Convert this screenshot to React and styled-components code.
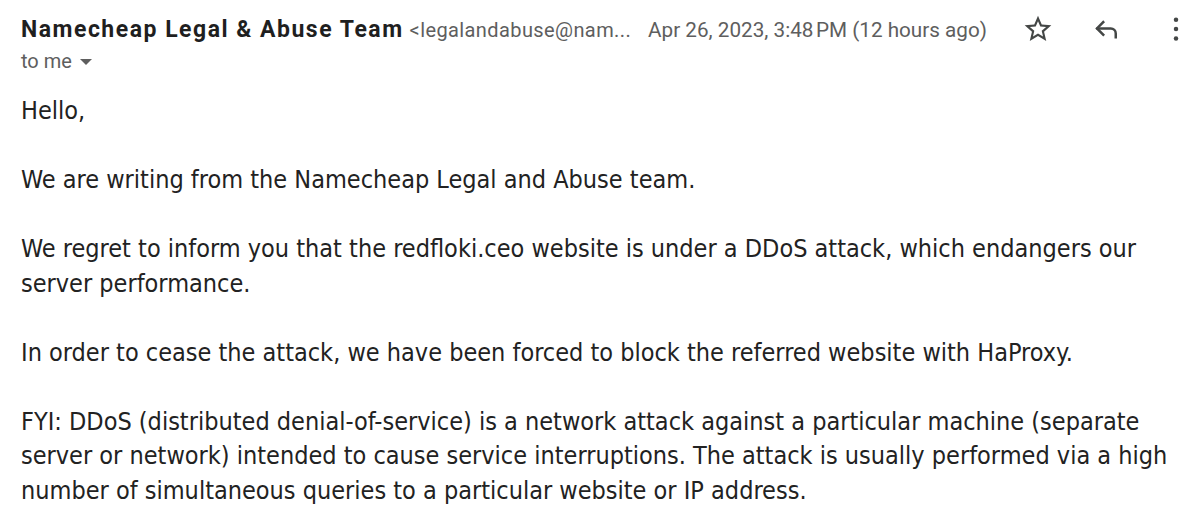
import React from 'react';
import styled, { createGlobalStyle } from 'styled-components';

const GlobalStyle = createGlobalStyle`
  body {
    margin: 0;
    background: #fff;
  }
`;

const Page = styled.div`
  width: 1200px;
  height: 530px;
  overflow: hidden;
  padding: 12px 0 0 21px;
  box-sizing: border-box;
`;

const Header = styled.div`
  display: flex;
  align-items: center;
  height: 34px;
`;

const Sender = styled.div`
  flex: 1;
  display: flex;
  align-items: baseline;
  min-width: 0;
  white-space: nowrap;
`;

const Name = styled.span`
  font-family: Roboto, 'Liberation Sans', sans-serif;
  font-weight: 700;
  font-size: 23px;
  letter-spacing: 1.5px;
  color: #1f1f1f;
`;

const Email = styled.span`
  font-family: Roboto, 'Liberation Sans', sans-serif;
  font-size: 20px;
  letter-spacing: 0.4px;
  color: #5e5e5e;
  margin-left: 6px;
`;

const Date = styled.span`
  font-family: Roboto, 'Liberation Sans', sans-serif;
  font-size: 20.7px;
  color: #5e5e5e;
  margin-left: 17px;
`;

const Actions = styled.div`
  display: flex;
  align-items: center;
  gap: 37px;
  margin-right: 8px;
`;

const IconButton = styled.button`
  border: 0;
  background: none;
  padding: 0;
  width: 32px;
  height: 32px;
  display: flex;
  align-items: center;
  justify-content: center;
  color: #444746;
`;

const ToLine = styled.div`
  display: flex;
  align-items: center;
  gap: 8px;
  font-family: Roboto, 'Liberation Sans', sans-serif;
  font-size: 20px;
  color: #5e5e5e;
  height: 30px;
`;

const Caret = styled.span`
  width: 0;
  height: 0;
  border-left: 6px solid transparent;
  border-right: 6px solid transparent;
  border-top: 6px solid #5e5e5e;
  margin-top: 2px;
`;

const Body = styled.div`
  margin-top: 18px;
  width: 1160px;
  font-family: 'DejaVu Sans Condensed', 'DejaVu Sans', sans-serif;
  font-size: 25px;
  line-height: 34.5px;
  color: #222;
`;

const Para = styled.p`
  margin: 0 0 34.5px;
`;

const StarIcon = () => (
  <svg width="32" height="32" viewBox="0 0 24 24" fill="currentColor">
    <path d="M22 9.24l-7.19-.62L12 2 9.19 8.63 2 9.24l5.46 4.73L5.82 21 12 17.27 18.18 21l-1.63-7.03L22 9.24zM12 15.4l-3.76 2.27 1-4.28-3.32-2.88 4.38-.38L12 6.1l1.71 4.04 4.38.38-3.32 2.88 1 4.28L12 15.4z" />
  </svg>
);

const ReplyIcon = () => (
  <svg width="30" height="30" viewBox="0 0 24 24" fill="none" stroke="currentColor" strokeWidth="2" strokeLinecap="square">
    <path d="M9 6.5L4 11.5l5 5" />
    <path d="M4.5 11.5H15a4 4 0 0 1 4 4v3" />
  </svg>
);

const MoreIcon = () => (
  <svg width="30" height="30" viewBox="0 0 24 24" fill="currentColor">
    <circle cx="12" cy="4.5" r="1.8" />
    <circle cx="12" cy="12" r="1.8" />
    <circle cx="12" cy="19.5" r="1.8" />
  </svg>
);

const App = () => (
  <>
    <GlobalStyle />
    <Page>
      <Header>
        <Sender>
          <Name>Namecheap Legal &amp; Abuse Team</Name>
          <Email>&lt;legalandabuse@nam...</Email>
          <Date>Apr 26, 2023, 3:48&#8239;PM (12 hours ago)</Date>
        </Sender>
        <Actions>
          <IconButton><StarIcon /></IconButton>
          <IconButton><ReplyIcon /></IconButton>
          <IconButton><MoreIcon /></IconButton>
        </Actions>
      </Header>
      <ToLine>
        to me <Caret />
      </ToLine>
      <Body>
        <Para>Hello,</Para>
        <Para>We are writing from the Namecheap Legal and Abuse team.</Para>
        <Para>
          We regret to inform you that the redfloki.ceo website is under a DDoS attack, which endangers our
          server performance.
        </Para>
        <Para>In order to cease the attack, we have been forced to block the referred website with HaProxy.</Para>
        <Para>
          FYI: DDoS (distributed denial-of-service) is a network attack against a particular machine (separate
          server or network) intended to cause service interruptions. The attack is usually performed via a high
          number of simultaneous queries to a particular website or IP address.
        </Para>
      </Body>
    </Page>
  </>
);

export default App;
